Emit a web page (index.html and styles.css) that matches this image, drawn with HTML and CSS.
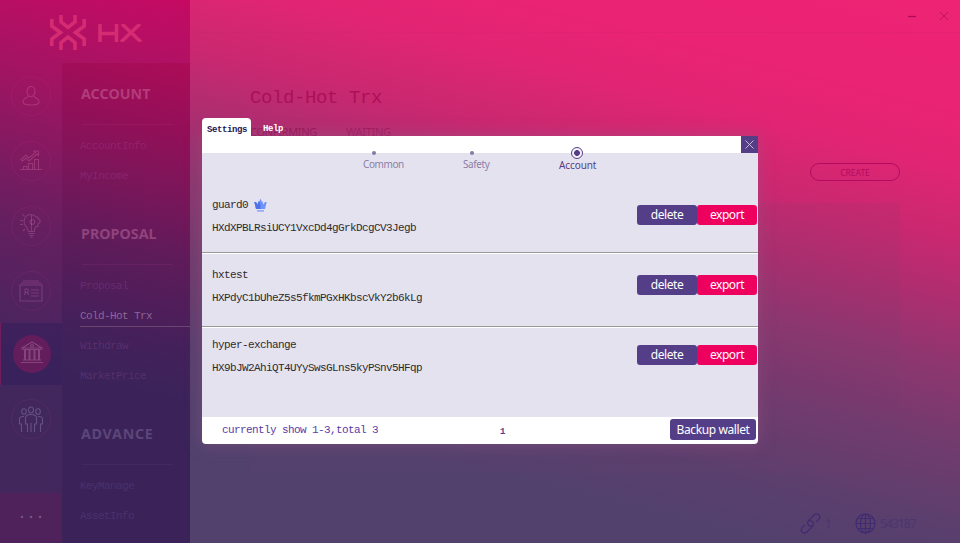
FILE: index.html
```html
<!DOCTYPE html>
<html lang="en">
<head>
<meta charset="utf-8">
<title>HX Wallet</title>
<link rel="stylesheet" href="styles.css">
</head>
<body>
<div class="app">
  <aside class="sidebar">
    <div class="logo">
      <svg width="36" height="36" viewBox="0 0 36 36" fill="none" stroke="currentColor" stroke-width="3.6"><path d="M11 0V7L18 12.500L25 7V0M11 35V27.500L18 22L25 27.500V35"/><path d="M1.800 4V11L10.500 17.500L1.800 24V31M34.200 4V11L25.500 17.500L34.200 24V31"/></svg>
      <svg class="wordmark" width="44" height="18" viewBox="0 0 44 18" fill="none" stroke="currentColor" stroke-width="3.600"><path d="M2 0V18M2 9.500H19M18.500 0V18M24 0L43 18M42 0L23 18"/></svg>
    </div>
    <div class="nav">
      <nav class="rail">
        <div class="rail-item"><span class="ring"><svg width="18" height="20" viewBox="0 0 18 20"><ellipse cx="9" cy="5.500" rx="4" ry="5"/><path d="M6.500 10.500C3 12 1 13 1 16C1 20 17 20 17 16C17 13 15 12 11.500 10.500"/></svg></span></div>
        <div class="rail-item"><span class="ring"><svg width="22" height="21" viewBox="0 0 22 21"><path d="M0 19.500H22M3.500 19.500V16.500H7V19.500M8.500 19.500V13.500H12.500V19.500M14.500 19.500V9.500H18.500V19.500"/><path d="M1 9.500L6 5L9 8L15.500 2.500L14 1H18.500V5.500L17 4L9 11L6 8L2.500 11Z"/></svg></span></div>
        <div class="rail-item"><span class="ring"><svg width="22" height="25" viewBox="0 0 22 25"><path d="M11.500 1.500C3 1.500 2.500 11 7 14.500L8.500 18.500H14.500V16L16 13.500H18V11L20 9.500V7L18 5.500V4H15.500L14 2H11.500V18M8.500 20.500H14.500M9.500 22.500H13.500M10.500 24.200H12.500"/><circle cx="12.500" cy="9" r="2.300"/><path d="M4.500 3.500L2.500 1M3 7.500H0M3 11.500H0M5 16L3 18"/></svg></span></div>
        <div class="rail-item"><span class="ring"><svg width="24" height="22" viewBox="0 0 24 22"><path d="M1 5H23V21H1ZM2 3H22M4 1H20M5.500 15L6.500 12M9.500 15L8.500 12M12 10H20M12 13H20M12 16H20"/><circle cx="7.500" cy="10.500" r="1.800"/></svg></span></div>
        <div class="rail-item active"><span class="ring"><svg width="24" height="24" viewBox="0 0 24 24"><path d="M2 8L12 2L22 8ZM2 9.500H22"/><circle cx="12" cy="5.800" r="1.300"/><path d="M5 10V20M9.500 10V20M14.500 10V20M19 10V20" stroke-width="2"/><path d="M3 20H21M1 22.500H23"/></svg></span></div>
        <div class="rail-item people"><span class="ring"><svg width="26" height="26" viewBox="0 0 26 26"><ellipse cx="6" cy="5.500" rx="2.300" ry="2.800"/><ellipse cx="13" cy="4" rx="2.500" ry="3"/><ellipse cx="20" cy="5.500" rx="2.300" ry="2.800"/><path d="M3.500 26V18H1.500V13Q1.500 10 6 10.500M22.500 26V18H24.500V13Q24.500 10 20 10.500M9.500 26V18H7.500V12Q7.500 8.500 13 8.500Q18.500 8.500 18.500 12V18H16.500V26M13 17V26"/></svg></span></div>
        <div class="more">...</div>
      </nav>
      <div class="menu">
        <section><h2>ACCOUNT</h2><a>AccountInfo</a><a>MyIncome</a></section>
        <section><h2>PROPOSAL</h2><a>Proposal</a><a class="current">Cold-Hot Trx</a><a>Withdraw</a><a>MarketPrice</a></section>
        <section class="advance"><h2>ADVANCE</h2><a>KeyManage</a><a>AssetInfo</a></section>
      </div>
    </div>
  </aside>
  <main class="main">
    <header class="titlebar">
      <svg width="8" height="8" viewBox="0 0 8 8"><path d="M0 4.500H8" stroke-width="1.200"/></svg>
      <svg width="8" height="8" viewBox="0 0 8 8"><path d="M0 0L8 8M8 0L0 8" stroke-width=".7"/></svg>
    </header>
    <h1>Cold-Hot Trx</h1>
    <div class="page-tabs"><span class="on">CONFIRMING</span><span>WAITING</span></div>
    <div class="actions"><button class="create">CREATE</button></div>
    <div class="card"></div>
    <footer class="status">
      <svg width="21" height="21" viewBox="0 0 21 21"><g transform="rotate(-45 10.500 10.500)"><path d="M10.500 13.500Q8 13 8 10.500Q8 7 11.500 7H19Q22.500 7 22.500 10.500Q22.500 13.500 19 13.500H15.500"/><path d="M10.500 7.500Q13 8 13 10.500Q13 14 9.500 14H2Q-1.500 14 -1.500 10.500Q-1.500 7.500 2 7.500H5.500"/></g></svg>
      <span class="peers">1</span>
      <svg width="21" height="21" viewBox="0 0 21 21"><circle cx="10.500" cy="10.500" r="9.500"/><ellipse cx="10.500" cy="10.500" rx="5" ry="9.500"/><path d="M10.500 1V20M1 10.500H20M2.500 5.500H18.500M2.500 15.500H18.500"/></svg>
      <span>543187</span>
    </footer>
  </main>
</div>
<div class="dialog">
  <div class="tabs"><span class="tab selected">Settings</span><span class="tab">Help</span></div>
  <div class="panel">
    <div class="bar"><button class="close"><svg width="9" height="9" viewBox="0 0 9 9"><path d="M.5 .5L8.500 8.500M8.500 .5L.5 8.500"/></svg></button></div>
    <div class="body">
      <div class="steps">
        <div class="step common"><i></i><span>Common</span></div>
        <div class="step safety"><i></i><span>Safety</span></div>
        <div class="step account"><i></i><span>Account</span></div>
      </div>
      <div class="row first">
        <div class="info"><div class="name">guard0 <svg width="13" height="13" viewBox="0 0 13 13"><path d="M.3 3H2L3.500 5.500L4.500 2.500H5.500L6 .3H7L7.500 2.500H8.500L9.500 5.500L11 3H12.700L11 10H2Z" fill="#6f92fb"/><path d="M.3 3H2L3.500 5.500L4.500 2.500H5.500L6.500 6V10H2Z" fill="#4e73e8"/><path d="M3 11.300H10V12.500H3Z" fill="#7194fa"/></svg></div><div class="addr">HXdXPBLRsiUCY1VxcDd4gGrkDcgCV3Jegb</div></div>
        <button class="btn">delete</button><button class="btn export">export</button>
      </div>
      <div class="row">
        <div class="info"><div class="name">hxtest</div><div class="addr">HXPdyC1bUheZ5s5fkmPGxHKbscVkY2b6kLg</div></div>
        <button class="btn">delete</button><button class="btn export">export</button>
      </div>
      <div class="row last">
        <div class="info"><div class="name">hyper-exchange</div><div class="addr">HX9bJW2AhiQT4UYySwsGLns5kyPSnv5HFqp</div></div>
        <button class="btn">delete</button><button class="btn export">export</button>
      </div>
    </div>
    <div class="foot"><span class="count">currently show 1-3,total 3</span><span class="page">1</span><button class="btn backup">Backup wallet</button></div>
  </div>
</div>
</body>
</html>
```
FILE: styles.css
```css
* { box-sizing: border-box; }
body { margin: 0; width: 960px; height: 543px; overflow: hidden; font-family: "Noto Sans", sans-serif; }
h1, h2 { margin: 0; font-weight: normal; }
button { border: 0; padding: 0; margin: 0; font-family: inherit; }
svg { display: block; flex: none; }

.app {
  display: flex; width: 960px; height: 543px;
  background: linear-gradient(194deg, #ee2374 0%, #ea2374 14%, #e02573 22%, #c92870 31%, #b02d70 38%, #8e366f 47%, #723b6e 57%, #5a3f6d 68%, #52416d 76%, #52416d 100%) fixed;
}

/* sidebar */
.sidebar {
  width: 190px; height: 543px; display: flex; flex-direction: column;
  background: linear-gradient(194deg, #cd0760 0%, #c90862 23%, #b60f64 31%, #a21462 39%, #861961 48%, #661f60 58%, #52235f 68%, #42275d 77%, #41275c 100%) fixed;
}
.logo { height: 63px; padding: 15px 0 0 50px; display: flex; color: #d52b73; }
.wordmark { margin: 9px 0 0 12px; }
.nav { display: flex; height: 480px; }
.rail { width: 62px; display: flex; flex-direction: column; align-items: stretch; }
.rail-item { height: 65px; display: flex; align-items: center; justify-content: center; color: rgba(235, 140, 190, .25); }
.ring { width: 40px; height: 40px; border-radius: 50%; border: 1px solid rgba(225, 70, 150, .1); display: flex; align-items: center; justify-content: center; }
.rail-item svg { fill: none; stroke: currentColor; stroke-width: 1.1; }
.rail-item.active { background: rgba(40, 26, 88, .35); height: 62px; border-left: 1px solid #701d5d; }
.rail-item.active .ring { width: 38px; height: 38px; background: #631d5d; border: 0; color: #85447a; }
.rail-item.active svg { margin-top: -5px; }
.rail-item.people { color: #665080; height: 68px; }
.more { margin-top: auto; height: 50px; background: #50225b; color: #786083; font: 15px/44px "Liberation Mono", monospace; text-align: center; }
.menu { width: 128px; background: linear-gradient(194deg, #b40c58 0%, #ac0c58 33%, #950f58 41%, #7a165a 50%, #5f1b5a 58%, #45205a 69%, #3b235a 76%, #3b235a 100%) fixed; }
.menu h2 { height: 62px; padding-left: 19px; margin-bottom: 6px; font: bold 14.300px/62px "Noto Sans", sans-serif; color: rgba(215, 135, 180, .4); background: linear-gradient(rgba(190, 70, 140, .13), rgba(190, 70, 140, .13)) 20px 100% / 91px 1px no-repeat; }
.menu .advance h2 { letter-spacing: .7px; color: #5b4678; background-image: linear-gradient(#432961, #432961); }
.menu section { height: 140px; }
.menu section:nth-child(2) { height: 200px; }
.menu a { display: block; height: 30px; margin-left: 18px; font: 11px/30px "Liberation Mono", monospace; letter-spacing: -.6px; color: rgba(180, 90, 165, .24); }
.menu a.current { color: rgba(205, 165, 205, .53); background: linear-gradient(#6c4671, #6c4671) 0 25px / 100% 1px no-repeat; }
.menu .advance a { color: #48326a; }

/* main page */
.main { width: 770px; height: 543px; }
.titlebar { height: 33px; padding: 12px 12px 0 0; display: flex; justify-content: flex-end; gap: 24px; border-bottom: 1px solid rgba(190, 30, 105, .12); }
.titlebar svg { fill: none; stroke: #aa0a5c; }
h1 { margin-left: 60px; padding-top: 52px; height: 92px; font: 19px/26px "Liberation Mono", monospace; letter-spacing: -.4px; color: #ab1059; }
.page-tabs { display: flex; gap: 30px; margin-left: 60px; height: 38px; font-size: 11px; letter-spacing: -.3px; line-height: 14px; color: #a01a60; }
.page-tabs .on { width: 66px; color: #991456; }
.actions { display: flex; justify-content: flex-end; padding-right: 60px; height: 40px; }
.create { width: 90px; height: 18px; border: 1px solid #b20b60; border-radius: 9px; background: transparent; color: #b20b60; font-size: 8.500px; line-height: 17px; }
.card { width: 650px; height: 270px; margin-left: 60px; border-radius: 3px; background: rgba(110, 70, 115, .09); }
.status { display: flex; align-items: center; height: 20px; margin-top: 40px; padding-left: 610px; color: #4b3670; font-size: 12px; letter-spacing: -.9px; }
.status svg { fill: none; stroke: #402b72; stroke-width: 1.2; overflow: visible; }
.peers { width: 34px; padding-left: 4px; }
.status span:last-child { margin-left: 4px; }

/* settings dialog */
.dialog { position: absolute; left: 202px; top: 118px; width: 556px; }
.tabs { display: flex; height: 18px; }
.tab { font: bold 9px/23px "Liberation Mono", monospace; letter-spacing: -.4px; color: #fff; padding-left: 12px; }
.tab.selected { width: 49px; padding: 1px 0 0 5px; background: #fff; color: #241653; border-radius: 4px 4px 0 0; }
.panel { height: 308px; background: #fff; border-radius: 0 0 4px 4px; box-shadow: 0 0 16px rgba(150, 90, 135, .5); }
.bar { height: 17px; display: flex; justify-content: flex-end; }
.close { width: 17px; height: 17px; background: #543e88; display: flex; align-items: center; justify-content: center; }
.close svg { fill: none; stroke: #d0c7e0; stroke-width: .9; }
.body { height: 264px; background: #e4e2ee; }
.steps { display: flex; height: 35px; padding-left: 161px; font-size: 10px; letter-spacing: -.4px; color: #8b80a9; }
.step { height: 35px; }
.step i { display: block; width: 4px; height: 4px; margin: -2px 0 0 9px; border-radius: 50%; background: #857aa4; }
.step span { display: block; line-height: 14px; margin-top: 2px; }
.step.common { width: 100px; }
.step.safety { width: 96px; }
.step.safety i { margin-left: 7px; }
.step.account { color: #543e88; }
.step.account i { width: 12px; height: 12px; margin: -6px 0 0 12px; border: 1.500px solid #543e88; background: radial-gradient(circle, #543e88 0 2.600px, #f4f2f8 3.200px); }
.step.account span { margin-top: -1px; letter-spacing: -.1px; }
.row { display: flex; height: 74px; padding: 11px 1px 0 10px; border-bottom: 1px solid #fff; box-shadow: inset 0 -1px #999; color: #2d2b2e; }
.row.first { height: 66px; padding-top: 7px; }
.row.last { border: 0; box-shadow: none; padding-top: 7px; }
.info { flex: 1; font: 11px/20px "Liberation Mono", monospace; letter-spacing: -.6px; }
.name { height: 23px; display: flex; align-items: flex-start; gap: 6px; }
.name svg { margin-top: 4px; }
.row .name, .row .addr { white-space: nowrap; }
.btn { width: 60px; height: 20px; border-radius: 3px; background: #543e88; color: #fff; font-size: 12px; letter-spacing: -.45px; line-height: 20px; }
.row .btn { margin-top: 10px; }
.export { background: #ee005f; }
.foot { height: 27px; display: flex; align-items: center; padding: 0 2px 0 20px; color: #5a3ba8; font: 11px "Liberation Mono", monospace; letter-spacing: -.6px; }
.count { width: 278px; padding-bottom: 1px; }
.page { flex: 1; font-size: 9px; font-weight: bold; color: #543e88; padding-top: 2px; }
.backup { width: 86px; height: 21px; font: 12px/21px "Noto Sans", sans-serif; letter-spacing: -.4px; margin-bottom: 2px; }
```
